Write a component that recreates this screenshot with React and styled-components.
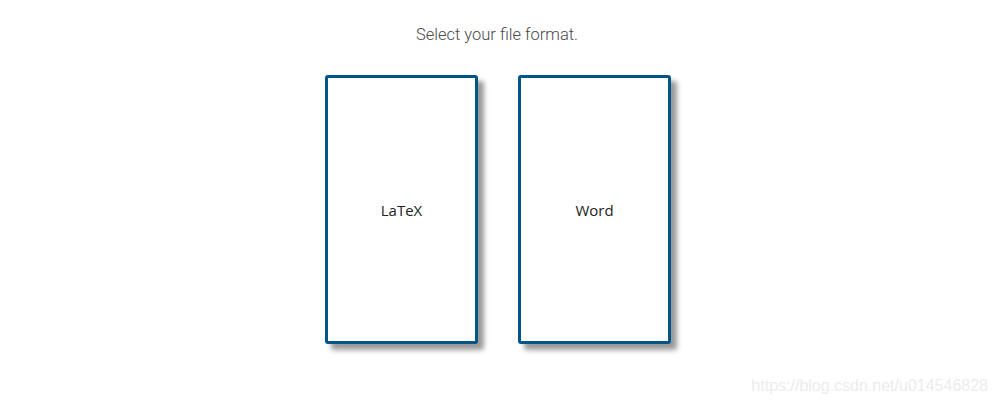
import React from "react";
import styled, { createGlobalStyle } from "styled-components";

const Global = createGlobalStyle`
  html, body { margin: 0; padding: 0; background: #fff; }
  body { width: 998px; height: 405px; overflow: hidden; }
`;

const Page = styled.div`
  position: relative;
  width: 998px;
  height: 405px;
  display: flex;
  flex-direction: column;
  align-items: center;
  padding-top: 25px;
  box-sizing: border-box;
`;

const Title = styled.div`
  font-family: Roboto, "Liberation Sans", sans-serif;
  font-weight: 300;
  font-size: 16.5px;
  line-height: 20px;
  color: #4a4a4a;
  margin-left: -4px;
`;

const Cards = styled.div`
  display: flex;
  gap: 40px;
  margin-top: 30px;
  margin-left: -2px;
`;

const Card = styled.button`
  width: 153px;
  height: 269px;
  box-sizing: border-box;
  border: 3px solid #005587;
  border-radius: 3px;
  background: #fff;
  box-shadow: 6px 6px 5px rgba(0, 0, 0, 0.4);
  display: flex;
  align-items: center;
  justify-content: center;
  font-family: "Open Sans", "Noto Sans", sans-serif;
  font-size: 15px;
  color: #222;
  padding: 0;
  cursor: pointer;
`;

const Watermark = styled.div`
  position: absolute;
  right: 10px;
  bottom: 10px;
  font-family: "Liberation Sans", Arial, sans-serif;
  font-size: 16px;
  color: #ececec;
`;

export default function App() {
  return (
    <>
      <Global />
      <Page>
        <Title>Select your file format.</Title>
        <Cards>
          <Card>LaTeX</Card>
          <Card>Word</Card>
        </Cards>
        <Watermark>https://blog.csdn.net/u014546828</Watermark>
      </Page>
    </>
  );
}
